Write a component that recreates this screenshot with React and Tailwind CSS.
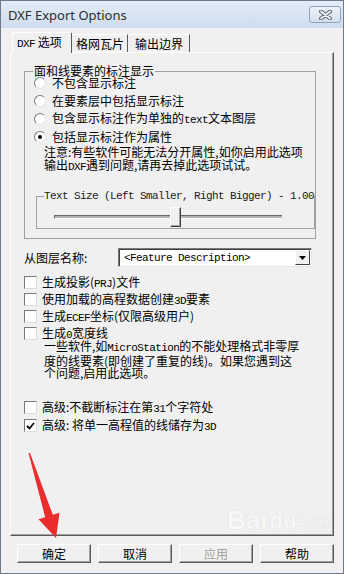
import React from "react";

// latin runs in the dialog use a narrow mono face (SimSun look)
function L({ children }) {
  return (
    <span className="font-['Liberation_Mono',monospace] text-[11px] tracking-[-0.6px]">
      {children}
    </span>
  );
}

function Radio({ checked, children }) {
  return (
    <div className="h-[18px] flex items-center gap-[6px]">
      <span className="w-[12px] h-[12px] rounded-full bg-white border border-t-[#7a7a7a] border-l-[#7a7a7a] border-r-[#e6e6e6] border-b-[#e6e6e6] flex items-center justify-center">
        {checked && <span className="w-[4px] h-[4px] rounded-full bg-black" />}
      </span>
      <span className="whitespace-nowrap leading-[12px]">{children}</span>
    </div>
  );
}

function Check({ checked, tall, children }) {
  return (
    <div className={`${tall ? "h-[18px]" : "h-[17px]"} flex items-center gap-[5px]`}>
      <span className="w-[13px] h-[13px] bg-white border border-t-[#7a7a7a] border-l-[#7a7a7a] border-r-[#dcdcdc] border-b-[#dcdcdc] flex items-center justify-center">
        {checked && (
          <svg width="9" height="8" viewBox="0 0 9 8">
            <path d="M1 4 L3.5 6.5 L8 1" fill="none" stroke="#000" strokeWidth="1.8" />
          </svg>
        )}
      </span>
      <span className="whitespace-nowrap leading-[12px]">{children}</span>
    </div>
  );
}

function Button({ children, disabled }) {
  return (
    <div
      className={`w-[74px] h-[19px] flex items-center justify-center bg-[#f0f0f0] border border-t-white border-l-white border-r-[#5a5a5a] border-b-[#5a5a5a] shadow-[inset_-1px_-1px_0_#a0a0a0] ${
        disabled ? "text-[#a0a0a0]" : "text-black"
      }`}
    >
      {children}
    </div>
  );
}

export default function App() {
  return (
    <div className="w-[344px] h-[574px] relative overflow-hidden bg-[#f0f0f0] border border-[#6f7b88] font-['Noto_Sans_CJK_SC',sans-serif] text-[12px] leading-[16px] text-black flex flex-col">
      {/* Title bar */}
      <div className="h-[27px] shrink-0 bg-gradient-to-b from-[#e4edf7] to-[#cddcee] flex items-center justify-between pl-[7px] pr-[2px]">
        <span className="font-['Noto_Sans',sans-serif] text-[13px] text-[#2e2e2e]">DXF Export Options</span>
        <div className="w-[32px] h-[17px] rounded-[3px] border border-[#8fa2b9] bg-gradient-to-b from-[#eef3f9] to-[#d3deeb] flex items-center justify-center">
          <svg width="13" height="10" viewBox="0 0 13 10">
            <path d="M2 1.5 L11 8.5 M11 1.5 L2 8.5" stroke="#5d6d80" strokeWidth="4" strokeLinecap="round" />
            <path d="M2 1.5 L11 8.5 M11 1.5 L2 8.5" stroke="#f4f7fb" strokeWidth="1.8" strokeLinecap="round" />
          </svg>
        </div>
      </div>

      {/* Tabs */}
      <div className="mt-[4px] pl-[11px] h-[20px] flex items-end relative z-10">
        <div className="h-[21px] -mb-[1px] w-[60px] bg-[#f0f0f0] border-t border-l border-white border-r border-r-[#5a5a5a] rounded-t-[2px] pl-[4px] flex items-center">
          <span className="whitespace-nowrap">
            <L>DXF</L> 选项
          </span>
        </div>
        <div className="h-[18px] w-[56px] border-t border-white border-r border-r-[#5a5a5a] pl-[4px] flex items-center">
          格网瓦片
        </div>
        <div className="h-[18px] w-[62px] border-t border-white border-r border-r-[#5a5a5a] pl-[7px] flex items-center">
          输出边界
        </div>
      </div>

      {/* Tab panel */}
      <div className="mx-[9px] h-[484px] shrink-0 border-t border-l border-white border-r border-b border-r-[#5a5a5a] border-b-[#5a5a5a] shadow-[inset_-1px_-1px_0_#a0a0a0] pl-[13px] pt-[12px] flex flex-col">
        <fieldset className="w-[288px] border border-[#a0a0a0] pl-[9px] pb-[9px]">
          <legend className="-ml-[1px] px-[1px] leading-[12px]">面和线要素的标注显示</legend>
          <div className="-mt-[3px] flex flex-col">
            <Radio>不包含显示标注</Radio>
            <Radio>在要素层中包括显示标注</Radio>
            <Radio>
              包含显示标注作为单独的<L>text</L>文本图层
            </Radio>
            <Radio checked>包括显示标注作为属性</Radio>
          </div>
          <div className="ml-[10px] -mt-[1px] leading-[13px] whitespace-nowrap">
            注意:有些软件可能无法分开属性,如你启用此选项
            <br />
            输出<L>DXF</L>遇到问题,请再去掉此选项试试。
          </div>
          <fieldset className="mt-[16px] ml-[2px] w-[267px] border border-[#a0a0a0] pl-[7px] pb-[1px]">
            <legend className="leading-[12px] whitespace-nowrap font-['Liberation_Mono',monospace] text-[11px] tracking-[-0.6px] text-[#1a1a1a]">
              Text Size (Left Smaller, Right Bigger) - 1.00
            </legend>
            <div className="relative mt-[5px] ml-[10px] w-[228px] h-[20px]">
              <div className="absolute left-0 right-0 top-[8px] h-[4px] bg-[#b4b4b4] border-t border-l border-[#6a6a6a] border-b border-b-white" />
              <div className="absolute left-[116px] top-0 w-[11px] h-[20px] bg-[#f0f0f0] border border-t-white border-l-white border-r-[#404040] border-b-[#404040] shadow-[inset_-1px_-1px_0_#a0a0a0]" />
            </div>
          </fieldset>
        </fieldset>

        <div className="mt-[9px] h-[19px] flex items-center">
          <span className="w-[94px]">从图层名称:</span>
          <div className="w-[194px] h-[19px] bg-white border border-t-[#7a7a7a] border-l-[#7a7a7a] border-r-[#e6e6e6] border-b-[#e6e6e6] shadow-[inset_1px_1px_0_#404040] flex items-center justify-between pl-[5px] pr-[1px]">
            <span className="whitespace-nowrap font-['Liberation_Mono',monospace] text-[11px] tracking-[-0.6px]">
              &lt;Feature Description&gt;
            </span>
            <span className="w-[15px] h-[15px] bg-[#f0f0f0] border border-t-white border-l-white border-r-[#404040] border-b-[#404040] flex items-center justify-center">
              <svg width="7" height="4" viewBox="0 0 7 4">
                <path d="M0 0 H7 L3.5 4 Z" fill="#000" />
              </svg>
            </span>
          </div>
        </div>

        <div className="mt-[7px] flex flex-col">
          <Check>
            生成投影(<L>PRJ</L>)文件
          </Check>
          <Check>
            使用加载的高程数据创建<L>3D</L>要素
          </Check>
          <Check>
            生成<L>ECEF</L>坐标(仅限高级用户)
          </Check>
          <Check>
            生成<L>0</L>宽度线
          </Check>
        </div>
        <div className="ml-[20px] -mt-[2px] leading-[12.5px] whitespace-nowrap">
          一些软件,如<L>MicroStation</L>的不能处理格式非零厚
          <br />
          度的线要素(即创建了重复的线)。如果您遇到这
          <br />
          个问题,启用此选项。
        </div>

        <div className="mt-[19px] flex flex-col">
          <Check tall>
            高级:不截断标注在第<L>31</L>个字符处
          </Check>
          <Check tall checked>
            高级: 将单一高程值的线储存为<L>3D</L>
          </Check>
        </div>
      </div>

      {/* Buttons */}
      <div className="mt-[8px] pl-[16px] flex gap-[7px]">
        <Button>确定</Button>
        <Button>取消</Button>
        <Button disabled>应用</Button>
        <Button>帮助</Button>
      </div>

      {/* watermark */}
      <div className="absolute left-[226px] top-[506px] flex items-end gap-[2px] opacity-50 pointer-events-none">
        <span className="font-['Liberation_Sans',sans-serif] font-bold text-[26px] leading-[26px] text-white [text-shadow:0_0_1px_#b8b8b8]">
          Bai
        </span>
        <span className="font-['Liberation_Sans',sans-serif] font-bold text-[22px] leading-[24px] text-white [text-shadow:0_0_1px_#b8b8b8]">
          du
        </span>
        <span className="text-[17px] leading-[22px] text-white [text-shadow:0_0_1px_#b8b8b8]">经验</span>
      </div>

      {/* red arrow */}
      <svg className="absolute left-0 top-0 pointer-events-none" width="344" height="574">
        <polygon
          points="27.5,452 29,452 51.8,513.8 58.5,511.7 55,537 37.5,518.3 44.2,516.2"
          fill="#ea2c2c"
        />
      </svg>
    </div>
  );
}
